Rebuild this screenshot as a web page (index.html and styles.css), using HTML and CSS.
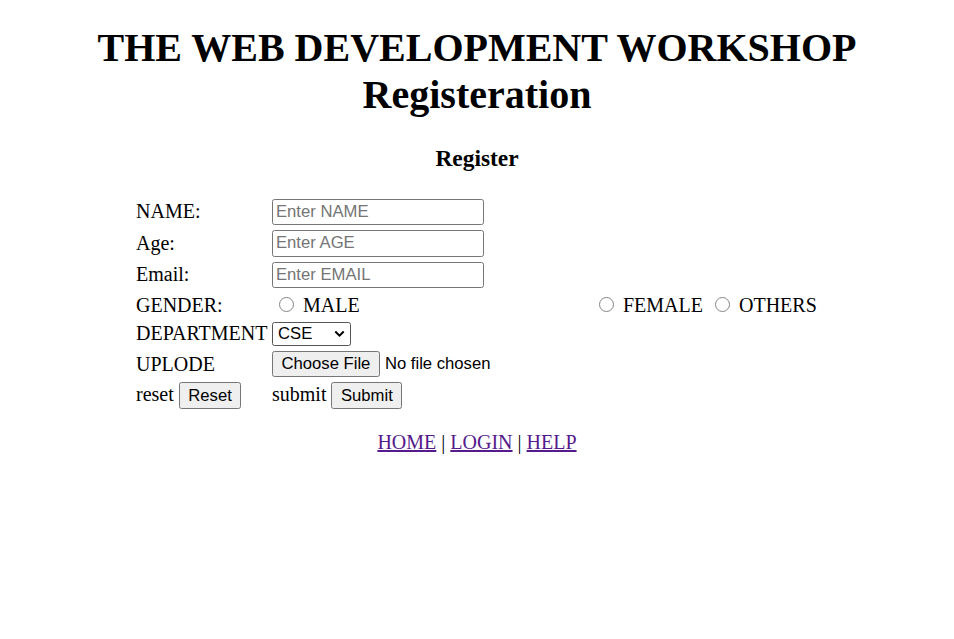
FILE: index.html
```html
<!DOCTYPE html>
<html lang="en">
<head>
<meta charset="utf-8">
<title>THE WEB DEVELOPMENT WORKSHOP - Registeration</title>
<link rel="stylesheet" href="styles.css">
</head>
<body>
<h1 class="title">THE WEB DEVELOPMENT WORKSHOP<br>Registeration</h1>
<h3 class="subtitle">Register</h3>
<form class="reg-grid">
  <div class="lbl">NAME:</div>
  <div class="ctl"><input class="text-input" type="text" placeholder="Enter NAME"></div>
  <div></div>

  <div class="lbl">Age:</div>
  <div class="ctl"><input class="text-input" type="text" placeholder="Enter AGE"></div>
  <div></div>

  <div class="lbl">Email:</div>
  <div class="ctl"><input class="text-input" type="text" placeholder="Enter EMAIL"></div>
  <div></div>

  <div class="lbl">GENDER:</div>
  <div class="line"><input class="radio" type="radio" name="g"> MALE</div>
  <div class="line"><input class="radio" type="radio" name="g"> FEMALE <input class="radio" type="radio" name="g"> OTHERS</div>

  <div class="lbl">DEPARTMENT</div>
  <div class="ctl">
    <span class="select-wrap">
      <select class="select"><option>CSE</option><option>ECE</option><option>MECH</option></select>
      <svg class="chev" width="11" height="8" viewBox="0 0 11 8"><path d="M1.3 1.5 L5.5 5.7 L9.7 1.5" fill="none" stroke="#000" stroke-width="2"/></svg>
    </span>
  </div>
  <div></div>

  <div class="lbl">UPLODE</div>
  <div class="ctl"><input class="file" type="file"></div>
  <div></div>

  <div class="line">reset <button class="btn" type="reset">Reset</button></div>
  <div class="line">submit <button class="btn" type="button">Submit</button></div>
  <div></div>
</form>
<p class="nav"><a class="link" href="#">HOME</a> | <a class="link" href="#">LOGIN</a> | <a class="link" href="#">HELP</a></p>
</body>
</html>
```

FILE: styles.css
```css
html {
  background: #fff;
}

body {
  margin: 0 10px 10px;
  padding-top: 0.1px;
  font-family: "Liberation Serif", "Times New Roman", serif;
  font-size: 20px;
  color: #000;
  background: #fff;
}

.title {
  font-size: 40px;
  font-weight: bold;
  margin: 23.7px 0 26.8px;
  text-align: center;
}

.subtitle {
  font-size: 23.4px;
  font-weight: bold;
  margin: 23.4px 0;
  text-align: center;
}

.reg-grid {
  display: grid;
  grid-template-columns: 131px 315px 226px;
  column-gap: 5px;
  row-gap: 5px;
  width: 682px;
  margin: 0 auto;
  padding: 3.75px 0 3px;
  align-items: center;
}

.lbl,
.line {
  white-space: nowrap;
}

.ctl {
  display: flex;
  align-items: center;
}

.text-input {
  box-sizing: border-box;
  width: 212px;
  height: 26.5px;
  margin: 0;
  padding: 1px 3px;
  border: 1px solid #767676;
  border-radius: 2.5px;
  font-family: "Liberation Sans", Arial, sans-serif;
  font-size: 16.67px;
  color: #000;
  background: #fff;
}

.text-input::placeholder {
  color: #757575;
}

.radio {
  appearance: none;
  -webkit-appearance: none;
  box-sizing: border-box;
  width: 15px;
  height: 15px;
  margin: 3.75px 4.5px 0 6.5px;
  border: 1px solid #858585;
  border-radius: 50%;
  background: #fff;
  vertical-align: baseline;
}

.select-wrap {
  position: relative;
  display: inline-block;
  line-height: 0;
}

.select {
  appearance: none;
  -webkit-appearance: none;
  box-sizing: border-box;
  width: 79px;
  height: 24px;
  margin: 0;
  padding: 0 0 0 5px;
  border: 1px solid #555;
  border-radius: 2.5px;
  background: #fff;
  color: #000;
  font-family: "Liberation Sans", Arial, sans-serif;
  font-size: 16.67px;
}

.chev {
  position: absolute;
  right: 6px;
  top: 8px;
  pointer-events: none;
}

.file {
  box-sizing: border-box;
  height: 26.5px;
  margin: 0;
  padding: 0;
  font-family: "Liberation Sans", Arial, sans-serif;
  font-size: 16.67px;
  line-height: 26.5px;
  color: #000;
}

.file::file-selector-button {
  box-sizing: border-box;
  height: 26.5px;
  margin: 0 5px 0 0;
  padding: 0 8.5px;
  border: 1px solid #767676;
  border-radius: 2.5px;
  background: #efefef;
  color: #000;
  font-family: "Liberation Sans", Arial, sans-serif;
  font-size: 16.67px;
}

.btn {
  box-sizing: border-box;
  height: 27px;
  margin: 0;
  padding: 0 8.5px;
  border: 1px solid #767676;
  border-radius: 2.5px;
  background: #efefef;
  color: #000;
  font-family: "Liberation Sans", Arial, sans-serif;
  font-size: 16.67px;
  vertical-align: baseline;
}

.nav {
  margin: 18.5px 0 20px;
  text-align: center;
}

.link {
  color: #551a8b;
  text-decoration: underline;
}
```
